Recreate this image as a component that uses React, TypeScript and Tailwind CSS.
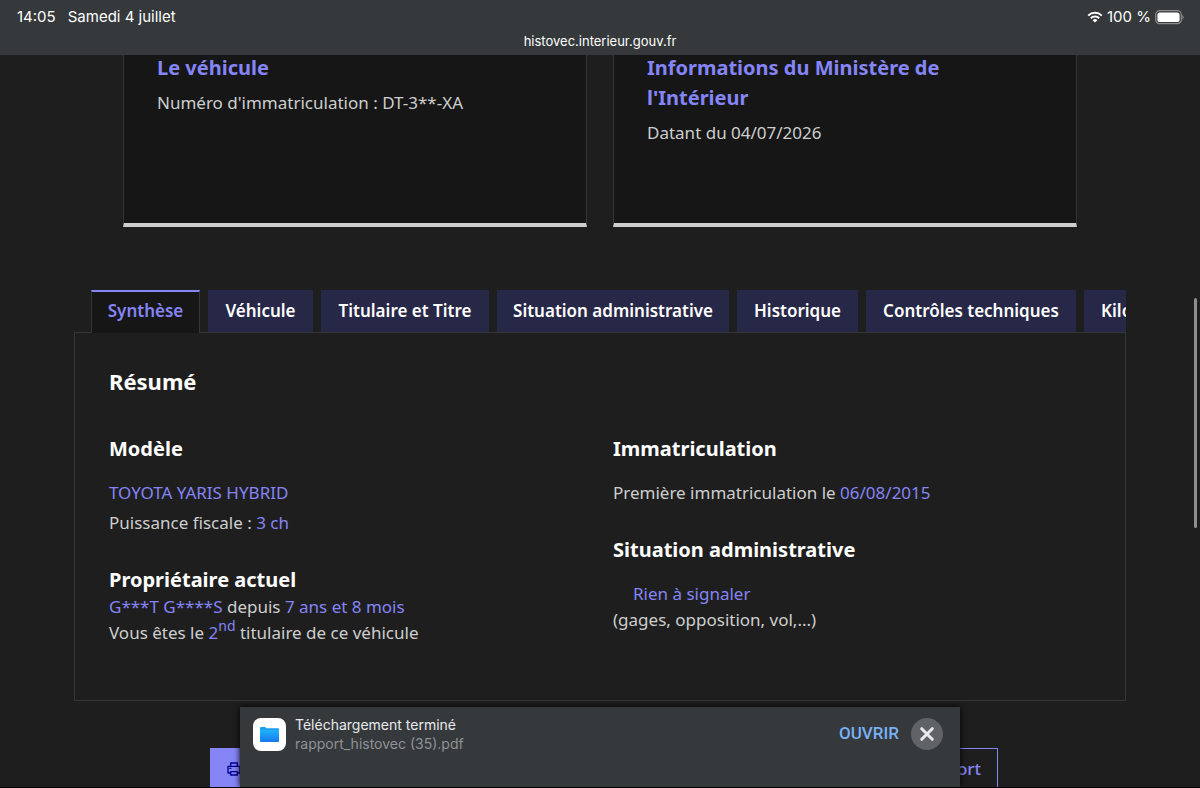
import { useState } from 'react';
import { RiPrinterLine } from 'react-icons/ri';

const tabs = [
  { label: 'Synthèse', width: 'w-[109px]' },
  { label: 'Véhicule', width: 'w-[105px]' },
  { label: 'Titulaire et Titre', width: 'w-[168px]' },
  { label: 'Situation administrative', width: 'w-[232px]' },
  { label: 'Historique', width: 'w-[121px]' },
  { label: 'Contrôles techniques', width: 'w-[210px]' },
  { label: 'Kilométrage', width: 'w-[136px]' },
];

function StatusBar() {
  return (
    <header className="relative z-20 h-[55px] shrink-0 bg-[#35393b] font-['Inter',sans-serif] text-white">
      <div className="flex h-[34px] items-center justify-between pl-[17px] pr-4 text-[15px]">
        <div className="flex gap-3">
          <span>14:05</span>
          <span>Samedi 4 juillet</span>
        </div>
        <div className="flex items-center gap-1">
          <svg width="16" height="12" viewBox="0 0 16 12" fill="none" stroke="#fff" strokeWidth="2">
            <path d="M1.2 4.6a9.7 9.7 0 0 1 13.6 0" />
            <path d="M3.8 7.3a6 6 0 0 1 8.4 0" />
            <path d="M8 11.6 5.600 9.200a3.400 3.400 0 0 1 4.800 0Z" fill="#fff" stroke="none" />
          </svg>
          <span>100 %</span>
          <svg width="29" height="15" viewBox="0 0 29 15" fill="none">
            <rect x=".7" y=".7" width="25.6" height="13" rx="4" stroke="#8b8d8e" strokeWidth="1.2" />
            <rect x="2.4" y="2.4" width="22.2" height="9.6" rx="2.6" fill="#fff" />
            <path d="M27.4 5v4.600c1.600-.6 1.600-4 0-4.600Z" fill="#8b8d8e" />
          </svg>
        </div>
      </div>
      <div className="text-center text-[13px] leading-[14px]">histovec.interieur.gouv.fr</div>
    </header>
  );
}

function InfoCard({ title, children }: { title: string; children: string }) {
  return (
    <div className="h-[174px] border-x border-b-4 border-x-[#353535] border-b-[#cecece] bg-[#161616] px-[33px]">
      <h3 className="text-xl font-bold leading-[30px] text-[#8585f6]">{title}</h3>
      <p className="mt-[7px] leading-[26px]">{children}</p>
    </div>
  );
}

function DownloadToast() {
  return (
    <div className="absolute bottom-px left-1/2 z-10 flex h-20 w-full max-w-[720px] -translate-x-1/2 items-start bg-[#35393b] px-[13px] pt-[11px] font-['Inter',sans-serif] shadow-[0_0_6px_#000]">
      <svg width="33" height="33" viewBox="0 0 33 33">
        <defs>
          <linearGradient id="folder" x1="0" y1="0" x2="0" y2="1">
            <stop offset="0" stopColor="#20b4f8" />
            <stop offset="1" stopColor="#1677f0" />
          </linearGradient>
        </defs>
        <rect width="33" height="33" rx="8" fill="#fff" />
        <path d="M7 11V10.200Q7 9 8.200 9H12l1.500 1.300H25Q26 10.300 26 11.300V13H7Z" fill="#1a9df0" />
        <path d="M7 12H26V23Q26 24 25 24H8Q7 24 7 23Z" fill="url(#folder)" />
      </svg>
      <div className="ml-[9px] flex-1 text-sm">
        <div className="leading-[14px] text-[#e8eaed]">Téléchargement terminé</div>
        <div className="pt-[3px] leading-[18px] text-[#8f9296]">rapport_histovec (35).pdf</div>
      </div>
      <div className="flex items-center gap-3 pr-1">
        <button className="font-['Roboto',sans-serif] text-[17px] font-medium text-[#7ab0f5]">OUVRIR</button>
        <button aria-label="Fermer" className="flex size-8 items-center justify-center rounded-full bg-[#5f6368]">
          <svg width="16" height="16" viewBox="0 0 16 16" stroke="#e8eaed" strokeWidth="3" strokeLinecap="round">
            <path d="M2.700 2.700l10.600 10.600M13.300 2.700l-10.600 10.600" />
          </svg>
        </button>
      </div>
    </div>
  );
}

export default function App() {
  const [active, setActive] = useState(0);

  return (
    <div className="relative flex h-screen flex-col overflow-hidden bg-[#1e1e1e] font-['Noto_Sans',sans-serif] text-[17px] text-[#cecece]">
      <StatusBar />

      <main className="-mt-0.5 min-h-0 flex-1 overflow-hidden px-[74px]">
        <div className="grid grid-cols-2 gap-[26px] px-[49px]">
          <InfoCard title="Le véhicule">Numéro d'immatriculation : DT-3**-XA</InfoCard>
          <InfoCard title="Informations du Ministère de l'Intérieur">Datant du 04/07/2026</InfoCard>
        </div>

        {/* Onglets */}
        <div role="tablist" className="relative z-10 mt-[63px] flex h-[43px] gap-2 overflow-hidden pl-[17px]">
          {tabs.map((tab, i) => (
            <button
              key={tab.label}
              role="tab"
              aria-selected={i === active}
              onClick={() => setActive(i)}
              className={`${tab.width} shrink-0 whitespace-nowrap font-semibold ${
                i === active
                  ? 'border-x border-t-2 border-x-[#353535] border-t-[#8585f6] bg-[#161616] pb-[3px] text-[#8585f6]'
                  : 'mb-px bg-[#272747] text-white'
              }`}
            >
              {tab.label}
            </button>
          ))}
        </div>

        <section className="-mt-px h-[369px] border border-[#353535] px-[34px] pt-8">
          <h2 className="text-[22px] font-bold leading-8 text-white">Résumé</h2>
          <div className="mt-[38px] grid grid-cols-2 gap-[26px] leading-[26px]">
            <div>
              <h3 className="text-xl font-bold leading-7 text-white">Modèle</h3>
              <p className="mt-[17px] text-[#8585f6]">TOYOTA YARIS HYBRID</p>
              <p className="mt-1">
                Puissance fiscale : <span className="text-[#8585f6]">3 ch</span>
              </p>
              <h3 className="mt-[30px] text-xl font-bold leading-7 text-white">Propriétaire actuel</h3>
              <p>
                <span className="text-[#8585f6]">G***T G****S</span> depuis{' '}
                <span className="text-[#8585f6]">7 ans et 8 mois</span>
              </p>
              <p>
                Vous êtes le{' '}
                <span className="text-[#8585f6]">
                  2<sup className="-top-2 text-sm leading-none">nd</sup>
                </span>{' '}
                titulaire de ce véhicule
              </p>
            </div>
            <div>
              <h3 className="text-xl font-bold leading-7 text-white">Immatriculation</h3>
              <p className="mt-[17px]">
                Première immatriculation le <span className="text-[#8585f6]">06/08/2015</span>
              </p>
              <h3 className="mt-[30px] text-xl font-bold leading-7 text-white">Situation administrative</h3>
              <p className="mt-[17px] pl-5 text-[#8585f6]">Rien à signaler</p>
              <p>(gages, opposition, vol,...)</p>
            </div>
          </div>
        </section>

        <div className="mt-[47px] pl-2">
          <div className="mx-auto flex h-[42px] w-full max-w-[788px] justify-between">
            <button aria-label="Imprimer" className="w-[260px] bg-[#8585f6] px-4 text-[#000091]">
              <RiPrinterLine size={16} />
            </button>
            <button className="border border-[#8585f6] px-4 font-medium text-[#8585f6]">rapport</button>
          </div>
        </div>
      </main>

      <DownloadToast />

      {/* Barre de défilement */}
      <div className="absolute right-[3px] top-[298px] h-[230px] w-[3px] rounded-full bg-[#8e8e8e]" />
      <div className="absolute inset-x-0 bottom-0 z-10 h-px bg-black" />
    </div>
  );
}
